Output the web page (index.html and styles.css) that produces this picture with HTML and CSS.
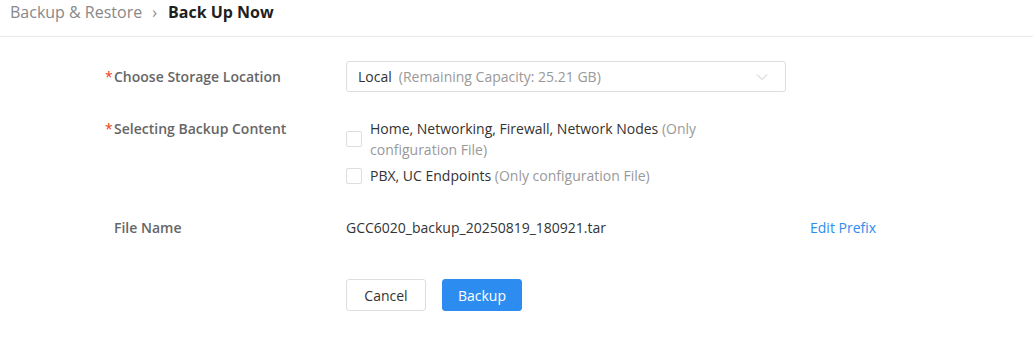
FILE: index.html
```html
<!DOCTYPE html>
<html lang="en">
<head>
<meta charset="UTF-8">
<title>Back Up Now</title>
<link rel="stylesheet" href="styles.css">
</head>
<body>
  <div class="crumbs">
    <span class="crumb">Backup &amp; Restore</span>
    <span class="sep">&#8250;</span>
    <span class="crumb current">Back Up Now</span>
  </div>

  <div class="form">
    <div class="row row-select">
      <div class="label"><span class="req">*</span>Choose Storage Location</div>
      <div class="field">
        <div class="select">
          <span class="value">Local</span>
          <span class="note">(Remaining Capacity: 25.21 GB)</span>
          <svg class="arrow" width="12" height="8" viewBox="0 0 12 8"><path d="M1 1.5 L6 6.5 L11 1.5" fill="none" stroke="#c5c8ce" stroke-width="1"/></svg>
        </div>
      </div>
    </div>

    <div class="row row-checks">
      <div class="label"><span class="req">*</span>Selecting Backup Content</div>
      <div class="field">
        <label class="check">
          <span class="box"></span>
          <span class="check-text">Home, Networking, Firewall, Network Nodes <span class="note">(Only configuration File)</span></span>
        </label>
        <label class="check">
          <span class="box"></span>
          <span class="check-text">PBX, UC Endpoints <span class="note">(Only configuration File)</span></span>
        </label>
      </div>
    </div>

    <div class="row row-file">
      <div class="label plain">File Name</div>
      <div class="field file-name">GCC6020_backup_20250819_180921.tar</div>
      <a class="link">Edit Prefix</a>
    </div>

    <div class="row row-buttons">
      <div class="label"></div>
      <div class="buttons">
        <button class="btn">Cancel</button>
        <button class="btn btn-primary">Backup</button>
      </div>
    </div>
  </div>
</body>
</html>
```

FILE: styles.css
```css
body {
  margin: 0;
  background: #fff;
  font-family: "Open Sans", "Noto Sans", Arial, sans-serif;
  font-size: 14px;
  color: #333;
}

.crumbs {
  height: 37px;
  box-sizing: border-box;
  padding: 0 10px 12px;
  display: flex;
  align-items: center;
  border-bottom: 1px solid #e8eaec;
  font-size: 16px;
}

.crumb {
  color: #888;
}

.crumb.current {
  color: #1f1f1f;
  font-weight: 700;
}

.sep {
  color: #888;
  margin: 0 11px 0 10px;
  font-size: 16px;
}

.form {
  padding: 24px 0 0 105px;
}

.row {
  display: flex;
}

.label {
  width: 241px;
  flex-shrink: 0;
  color: #666;
  font-weight: 600;
  line-height: 20px;
}

.label.plain {
  padding-left: 9px;
  box-sizing: border-box;
}

.req {
  color: #ed4014;
  display: inline-block;
  width: 9px;
  font-weight: 400;
}

.field {
  width: 440px;
}

.row-select .label {
  line-height: 31px;
}

.select {
  height: 31px;
  box-sizing: border-box;
  border: 1px solid #dcdee2;
  border-radius: 3px;
  display: flex;
  align-items: center;
  padding: 0 11px;
}

.select .value {
  margin-right: 7px;
}

.note {
  color: #999;
}

.arrow {
  margin-left: auto;
  margin-right: 6px;
}

.row-checks {
  margin-top: 26px;
}

.row-checks .label {
  line-height: 21px;
}

.check {
  display: flex;
  align-items: center;
  line-height: 21px;
}

.check + .check {
  margin-top: 5px;
}

.box {
  width: 16px;
  height: 16px;
  box-sizing: border-box;
  border: 1px solid #dcdee2;
  border-radius: 2px;
  flex-shrink: 0;
  margin-right: 8px;
}

.check-text {
  width: 340px;
}

.row-file {
  margin-top: 32px;
  line-height: 20px;
}

.file-name {
  color: #333;
}

.link {
  margin-left: 24px;
  color: #2d8cf0;
}

.row-buttons {
  margin-top: 41px;
}

.buttons {
  display: flex;
  gap: 16px;
}

.btn {
  width: 80px;
  height: 32px;
  border: 1px solid #dcdee2;
  border-radius: 3px;
  background: #fff;
  font-family: inherit;
  font-size: 14px;
  color: #333;
  padding: 0;
}

.btn-primary {
  background: #2d8cf0;
  border-color: #2d8cf0;
  color: #fff;
}
```
